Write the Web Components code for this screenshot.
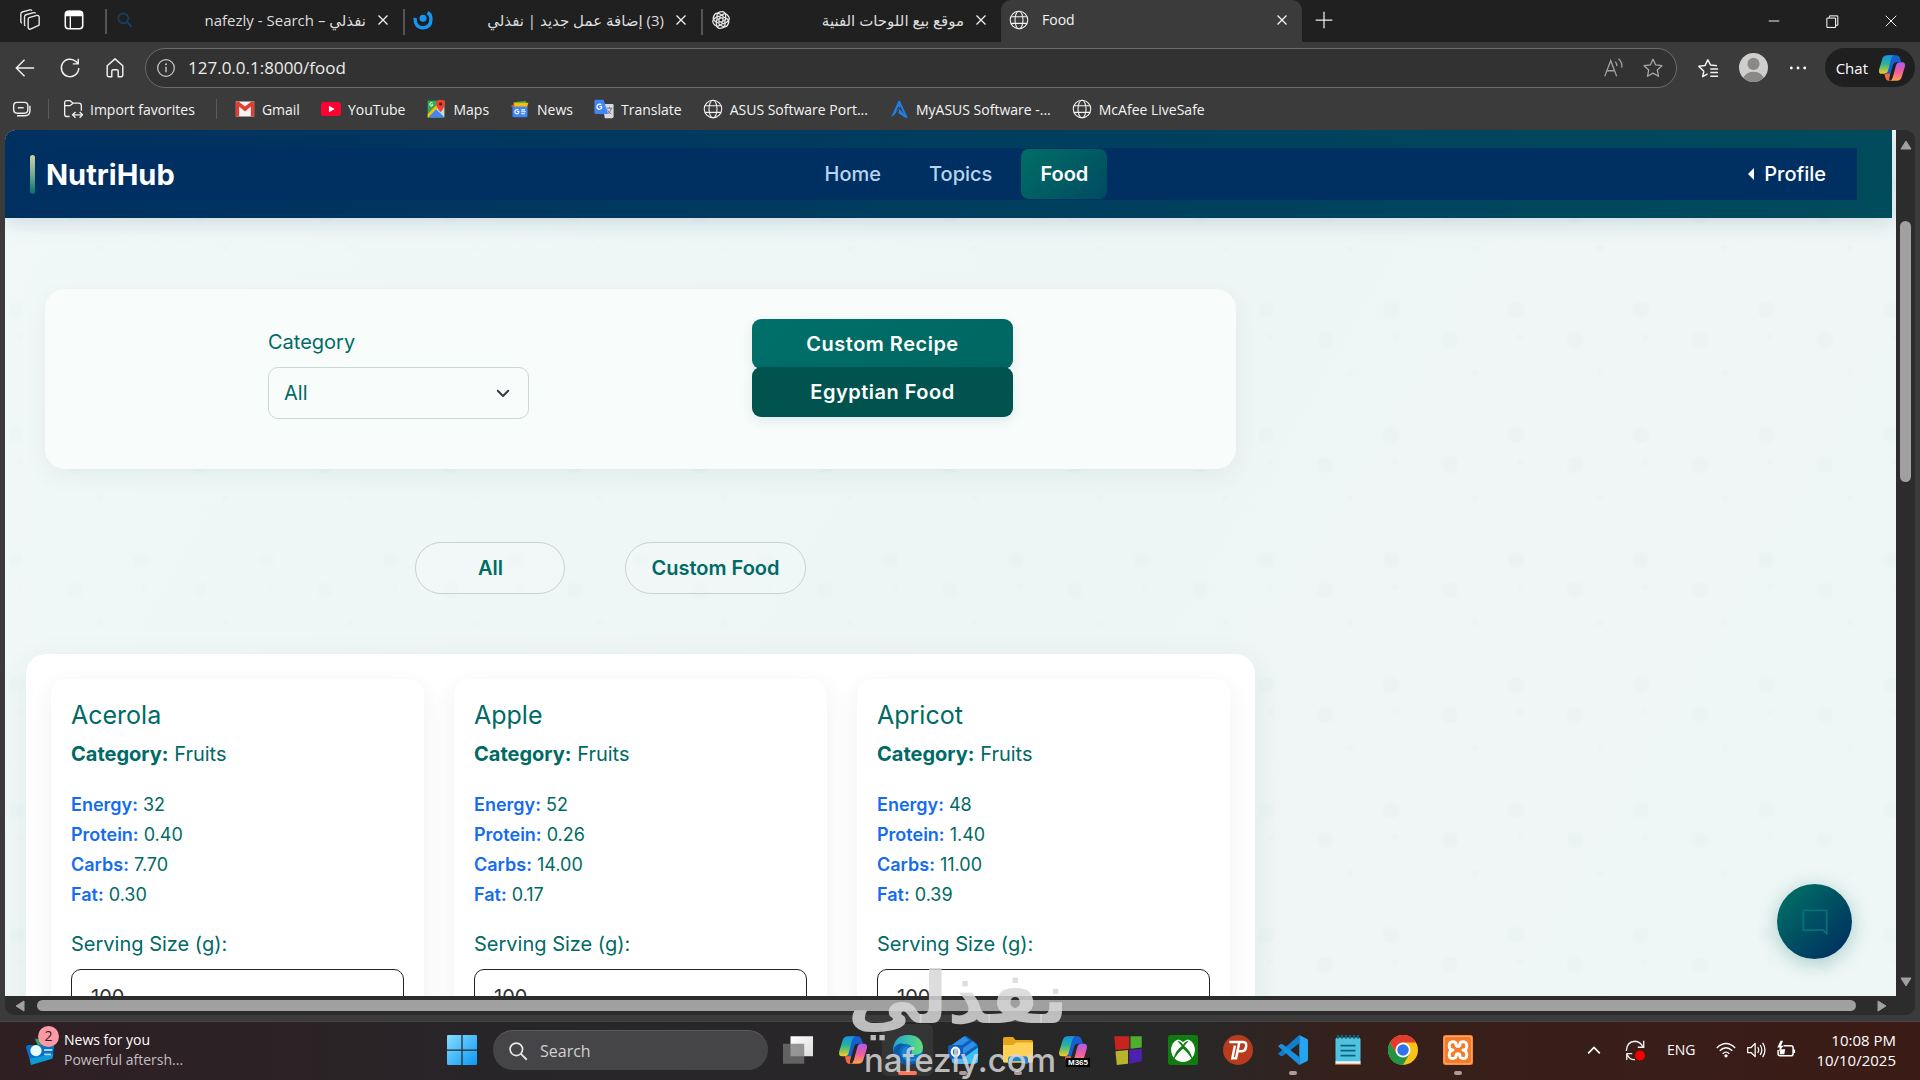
<!DOCTYPE html>
<html lang="en">
<head>
<meta charset="utf-8">
<title>Food</title>
<style>
  * { box-sizing: border-box; }
  body {
    margin: 0;
    height: 100vh;
    overflow: hidden;
    background: #3b3b3b;
    font-family: "Open Sans", "DejaVu Sans", sans-serif;
    font-size: 14px;
  }
</style>
</head>
<body>
<desktop-screen></desktop-screen>

<script>
const globe = '<g fill="none" stroke="#f2f2f2" stroke-width="1.3"><circle cx="12" cy="12" r="10.5"/><ellipse cx="12" cy="12" rx="4.8" ry="10.5"/><path d="M2.5 8h19M2.5 16h19"/></g>';
const copilot = `
  <defs>
    <linearGradient id="ca" x1="0" y1="0" x2="0" y2="1"><stop offset="0" stop-color="#1b8fe8"/><stop offset=".45" stop-color="#25b39b"/><stop offset="1" stop-color="#f2cf1d"/></linearGradient>
    <linearGradient id="cb" x1="0" y1="0" x2="0" y2="1"><stop offset="0" stop-color="#a95df0"/><stop offset=".5" stop-color="#ee5c9d"/><stop offset="1" stop-color="#ffa14a"/></linearGradient>
  </defs>
  <path d="M8 1h8q2 0 2.700 2.200L20 7h-4q-2.500 0-3.200 2.500L10 19q-.8 3-3 3z" fill="#1460d0"/>
  <path d="M8 1h6q-2 .5-2.700 3L8.500 14.500Q7.700 17 5.500 17H3.300Q0 17 1 13L3.600 4.500Q4.600 1 8 1z" fill="url(#ca)"/>
  <path d="M16 23h-6q2-.5 2.700-3l2.800-10.500Q16.300 7 18.500 7h2.200Q24 7 23 11l-2.600 8.500Q19.400 23 16 23z" fill="url(#cb)"/>
  <path d="M5.500 17h5l-.7 3Q9 23 11 23H9q-2 0-2.600-2.500z" fill="#f4683c"/>`;

const icons = {
  globe,
  copilot,
  workspaces: '<g fill="none" stroke="#e8e8e8" stroke-width="1.500" stroke-linejoin="round"><path d="M11 9.500 19.500 7q2-.4 2.500 1.500v9L12.500 22q-2 .3-2.500-1.500v-9q0-1.500 1-2z"/><path d="M7 18.500q-1-.4-1-2v-8q0-1.700 1.500-2.200L16 4q1.500-.3 2.200.8"/><path d="M3.200 15.500Q2 15 2 13.500v-8q0-1.700 1.500-2.200L12 1q1.600-.3 2.200.8"/></g>',
  tabs: '<rect x="2.500" y="2.500" width="19" height="19" rx="3.500" fill="none" stroke="#fff" stroke-width="1.700"/><path d="M2.500 5q.3-3 3-3h13q2.700 0 3 3v3h-19z" fill="#fff"/><path d="M8 8v13" stroke="#fff" stroke-width="1.500"/>',
  searchBlue: '<circle cx="10" cy="10" r="6" fill="none" stroke="#173f63" stroke-width="2"/><path d="m15 15 5 5" stroke="#173f63" stroke-width="2.500"/>',
  nafezly: '<circle cx="12" cy="10" r="4.200" fill="#1496f3"/><path d="M2.500 9.500Q2 21 12 21.500 22 21 21.500 10 21.300 5 17.500 3" fill="none" stroke="#1496f3" stroke-width="4"/>',
  gpt: '<g fill="none" stroke="#e8e8e8" stroke-width="1.500"><path id="p" d="M12 2.200q4.800-.8 5.600 4v5.300l-5.400 3.200M12 2.200Q8.500 2 7.300 5.500v6.200"/><use href="#p" transform="rotate(60 12 12)"/><use href="#p" transform="rotate(120 12 12)"/><use href="#p" transform="rotate(180 12 12)"/><use href="#p" transform="rotate(240 12 12)"/><use href="#p" transform="rotate(300 12 12)"/></g>',
  close: '<path d="m6 6 12 12M18 6 6 18" stroke="#f4f4f4" stroke-width="1.700"/>',
  plus: '<path d="M12 2v20M2 12h20" stroke="#eee" stroke-width="1.500"/>',
  minimize: '<path d="M3 12h18" stroke="#fff" stroke-width="1.600"/>',
  restore: '<path d="M3 6.500h14v15H3zM7 6V3h13.500v15H17" fill="none" stroke="#fff" stroke-width="1.600"/>',
  exit: '<path d="m3 3 18 18M21 3 3 21" stroke="#fff" stroke-width="1.600"/>',
  back: '<path d="M22 12H3M11.500 3 2.500 12l9 9" fill="none" stroke="#f0f0f0" stroke-width="1.600"/>',
  reload: '<path d="M21.500 12A9.500 9.500 0 1 1 18.500 5l2.500 2.500M21 2v5.500h-6" fill="none" stroke="#f0f0f0" stroke-width="1.600"/>',
  home: '<path d="M3.500 9.500 12 2l8.500 7.500V20q0 1.500-1.500 1.500h-3.500v-6q0-1.500-1.500-1.500h-4q-1.500 0-1.500 1.500v6H5q-1.500 0-1.500-1.500z" fill="none" stroke="#f0f0f0" stroke-width="1.600" stroke-linejoin="round"/>',
  info: '<circle cx="12" cy="12" r="10" fill="none" stroke="#c8c8c8" stroke-width="1.500"/><path d="M12 10.500V17" stroke="#c8c8c8" stroke-width="1.700"/><circle cx="12" cy="7.500" r="1.200" fill="#c8c8c8"/>',
  readAloud: '<path d="m3 21 6.500-17L16 21M5.500 15h8M14.500 5q2 2.200 1.500 5M18 2q4.500 4 3.500 9.500" fill="none" stroke="#a0a0a0" stroke-width="1.400"/>',
  star: '<path d="m12 2.500 2.900 6.200 6.800.8-5 4.700 1.300 6.800-6-3.400-6 3.400 1.300-6.800-5-4.700 6.800-.8z" fill="none" stroke="#a8a8a8" stroke-width="1.400" stroke-linejoin="round"/>',
  favorites: '<path d="m7.500 15.500-1.300 6 5.300-3M7.500 15.500 2 10.200l6.800-1L11.800 3l3 5.800 7 .8M14.500 13H23M14.500 17H23M14.500 21H23" fill="none" stroke="#f2f2f2" stroke-width="1.600" stroke-linejoin="round"/>',
  avatar: '<defs><clipPath id="c"><circle cx="12" cy="12" r="12"/></clipPath></defs><g clip-path="url(#c)"><path d="M0 0h24v24H0z" fill="#d0cecc"/><circle cx="12" cy="9" r="5" fill="#8b8987"/><ellipse cx="12" cy="22" rx="8.500" ry="6.500" fill="#8b8987"/></g>',
  dots: '<g fill="#fff"><circle cx="4" cy="12" r="1.700"/><circle cx="12" cy="12" r="1.700"/><circle cx="20" cy="12" r="1.700"/></g>',
  collections: '<g fill="none" stroke="#eee" stroke-width="1.700"><rect x="2" y="4" width="17" height="13" rx="4"/><path d="M7 10.500h7"/><path d="M21.500 8v6q0 6-6 6H6"/></g>',
  folderImport: '<path d="M8 21H4.500Q2 21 2 18.500v-14Q2 2 4.500 2h4L12 5h7q3 0 3 3v6M2 8h6.500L12 5M12 19h11M15 15.500 11.500 19l3.500 3.500M20 15.500l3.500 3.500-3.500 3.500" fill="none" stroke="#eee" stroke-width="1.600"/>',
  gmail: '<path d="M1 3h22v18H1z" fill="#f5f5f5"/><path d="M1 4.500v16.500h4V9l7 6 7-6v12h4V4.500Q21.500 2 19 3.500l-7 5.500-7-5.500Q2.500 2 1 4.500z" fill="#df3f33"/>',
  youtube: '<rect y="3.500" width="24" height="17" rx="3.500" fill="#ff0033"/><path d="M9.500 8v8l7-4z" fill="#fff"/>',
  maps: '<path d="M2 2h20v20H2z" fill="#34a853"/><path d="M2 22 22 2v20z" fill="#d6d6d6"/><path d="M2 22 12 12l10 10z" fill="#4285f4"/><path d="M2 18 18 2h4L3 22H2z" fill="#fbbc04"/><path d="M17.500 16Q12 9 12 6q.5-5 5.500-5T23 6q0 3-5.500 10z" fill="#ea4335"/><circle cx="17.500" cy="6" r="2" fill="#7b1710"/><path d="M8.500 7H6.200M8.500 7Q7 9.500 5 8 3.800 6 5.500 4.500q1.300-.8 2.500.3" fill="none" stroke="#fff" stroke-width="1.100"/>',
  news: '<path d="m4 4 15-2 1 9H5z" fill="#34a853"/><path d="m1 9 4-4 3 6z" fill="#ea4335"/><path d="M5 4.500h17L20 12H5z" fill="#fbbc04"/><path d="M3 9h18v11q0 2-2 2H5q-2 0-2-2z" fill="#4285f4"/><path d="M11 15H8.500M11 15q-.5 3-3 2.800Q5.500 17 5.800 15q.6-2.500 3-2.400l1.500.8M13.500 13H18M13.500 15.300H19M13.500 17.600H18" fill="none" stroke="#fff" stroke-width="1.300"/>',
  translate: '<path d="M10 6h12q1.500 0 1.500 1.500V21q0 2-2 2H13z" fill="#d8dce2"/><path d="M2 1h9.500L17 18H2.500Q.5 18 .5 16V2.500Q.5 1 2 1z" fill="#4285f4"/><path d="M9.500 9H6.700M9.500 9Q9 12.500 6 12.300 3.300 11.500 3.500 9 4 6 7 6l1.800.8" fill="none" stroke="#fff" stroke-width="1.500"/><path d="M15 11h7M18.500 9.500V11M21 11q-1 4-4.500 7M16 13q1.500 3.500 5 5" fill="none" stroke="#6e7a86" stroke-width="1.200"/>',
  myasus: '<path d="M11.500 2 2.500 21.500l4-2.500 7-9.500z" fill="#2080e8"/><path d="m12 2.500 9 19.500-9.500-6" fill="none" stroke="#2080e8" stroke-width="2.200" stroke-linejoin="round"/><path d="m13 12 8 10-3-1-6.500-6z" fill="#2080e8"/><path d="m8 16 3.500-7.500.8 2z" fill="#3b3b3b"/>',
  chevron: '<path d="m5 9 7 7 7-7" fill="none" stroke="#343a40" stroke-width="2.600" stroke-linecap="round" stroke-linejoin="round"/>',
  chat: '<path d="M2 2h20v20l-3-3H2z" fill="none" stroke="#087078" stroke-width="1.500"/>',
  up: '<path d="M12 4 22 20H2z" fill="#a0a0a0" stroke="#a0a0a0" stroke-width="2" stroke-linejoin="round"/>',
  down: '<path d="M12 20 2 4h20z" fill="#a0a0a0" stroke="#a0a0a0" stroke-width="2" stroke-linejoin="round"/>',
  left: '<path d="M4 12 20 2v20z" fill="#a0a0a0" stroke="#a0a0a0" stroke-width="2" stroke-linejoin="round"/>',
  right: '<path d="M20 12 4 2v20z" fill="#a0a0a0" stroke="#a0a0a0" stroke-width="2" stroke-linejoin="round"/>',
  widgets: '<path d="M7 3h9l4 5-8 6z" fill="#26a269"/><path d="M0 10q0-2 2-2h19q2 0 1.500 2L21 18 4 23z" fill="#0b6fc4"/><path d="m3 19 19-4-1 4-17 5z" fill="#0d9bd8"/><circle cx="8" cy="12.500" r="4.500" fill="#e9f7ff"/><path d="M14.500 12H21M14.500 15.500H20" stroke="#9edcff" stroke-width="1.500"/>',
  windows: '<defs><linearGradient id="w" x1="0" y1="0" x2="1" y2="1"><stop stop-color="#86dcff"/><stop offset="1" stop-color="#0a98f5"/></linearGradient></defs><path d="M0 1q0-1 1-1h10.500v11.500H0zM12.500 0H23q1 0 1 1v10.500H12.500zM0 12.500h11.500V24H1q-1 0-1-1zM12.500 12.500H24V23q0 1-1 1H12.500z" fill="url(#w)"/>',
  search: '<circle cx="10" cy="10" r="7.500" fill="none" stroke="#e8e8e8" stroke-width="2"/><path d="m15.500 15.500 7 7" stroke="#e8e8e8" stroke-width="2.200"/>',
  taskview: '<defs><linearGradient id="t" x1="0" y1="0" x2="1" y2="1"><stop stop-color="#fff"/><stop offset="1" stop-color="#dcdcdc"/></linearGradient></defs><path d="M6 1h18v16H6z" fill="url(#t)"/><path d="M0 7h17v16H0z" fill="#777" opacity=".75"/>',
  edge: '<defs><linearGradient id="e" x1="0" y1="0" x2="1" y2="0"><stop stop-color="#1fa4d6"/><stop offset="1" stop-color="#5ee07a"/></linearGradient></defs><circle cx="12" cy="12" r="12" fill="#0f6fc6"/><path d="M0 12Q1 0 12 0t12 10q0 6-7 6-3 0-2-2 2-6-5-7-7 0-10 5z" fill="url(#e)"/><path d="M10 8q-8 2-3 10 4 5 13 2-4 4-9 4Q0 22 1 10q4-5 9-2z" fill="#0c59a4"/><path d="M12 9q-4 5 0 9 5 3 10-1-3 5-9 4-7-2-6-7 1-4 5-5z" fill="#1c88d8"/>',
  outlook: '<path d="m3 8 10-7q1-.7 2 0l8 6q1 .8 1 2v11q0 3-3 3H6q-3 0-3-3z" fill="#0f5fb5"/><path d="m3 8 10-7 4 3-13 9zM8 13 20 5l3 3-13 9z" fill="#2d8fe8"/><path d="m6 23 18-13v10q0 3-3 3z" fill="#38c1f5"/><path d="m3 14 14 9H6q-3 0-3-3z" fill="#59b8f7"/><rect y="8" width="12" height="11" rx="2" fill="#0f5ebd"/><ellipse cx="6" cy="13.500" rx="3" ry="3.400" fill="none" stroke="#fff" stroke-width="1.800"/>',
  folder: '<path d="M0 3q0-1.500 1.500-1.500H8L10 4h12.500Q24 4 24 5.500V21q0 1-1 1H1q-1 0-1-1z" fill="#e5a51b"/><path d="M0 8h8l2.500-2H24v14.500q0 1.500-1.500 1.500h-21Q0 22 0 20.500z" fill="#ffd257"/><path d="M4 23v-3.500Q4 17 6.500 17h11q2.500 0 2.500 2.500V23h-3v-2H7v2z" fill="#1883d7"/>',
  m365: copilot,
  blocks: '<path d="M1 1h12v10L2 12z" fill="#c62420"/><path d="M14 1h9v9l-9 1z" fill="#4faf2c"/><path d="m2 13 10-1v11L3 24z" fill="#b7b32a"/><path d="m13 12 10-1v10l-10 2z" fill="#4c20b0"/>',
  xbox: '<rect width="24" height="24" rx="2" fill="#107c10"/><circle cx="12" cy="12" r="9.500" fill="#fff"/><path d="M6 3.500q3-.5 6 2 3-2.500 6-2Q12 0 6 3.500zM12 8q7 5 7.500 12-3.500-6-7.500-9-4 3-7.500 9Q5 13 12 8zM7.500 4.500Q11 5 12 8q1-3 4.500-3.500L12 10z" fill="#107c10"/>',
  pstudio: '<circle cx="12" cy="12" r="12" fill="#b73b1c"/><path d="M5 5.500h11q3 0 2.500 3.500l-.3 1.500q-.6 2.500-3.500 2.500h-3M9.500 8.500 7.500 18.500h3L13 6" fill="none" stroke="#fff" stroke-width="2"/>',
  vscode: '<path d="m17 0 6 3q1 .5 1 1.500v15q0 1-1 1.500l-6 3z" fill="#25a4f2"/><path d="m17 0v6.500L4 16.500 2.500 17 0 15z" fill="#0f7fcc"/><path d="M17 24 0 9l2.500-2L4 7.500l13 10z" fill="#1791df"/>',
  notepad: '<rect x="2" y="2" width="20" height="21" rx="1.500" fill="#50c3e0"/><path d="M2 21h20v2q0 1-1 1H3q-1 0-1-1z" fill="#f4f4f4"/><path d="M2 23h20v1H2z" fill="#b2632b"/><path d="M6 8.500h12M6 12.500h12M6 16.500h12" stroke="#07627f" stroke-width="1.500"/><path d="M4 0v3M7.200 0v3M10.400 0v3M13.600 0v3M16.800 0v3M20 0v3" stroke="#0c6a85" stroke-width="1.500"/>',
  chrome: '<circle cx="12" cy="12" r="12" fill="#fbc116"/><path d="M1.600 6A12 12 0 0 1 22.400 6H12L6.800 15z" fill="#e33b2e"/><path d="M1.600 6A12 12 0 0 0 12 24l5.200-9H6.800z" fill="#229342"/><circle cx="12" cy="12" r="6" fill="#fff"/><circle cx="12" cy="12" r="4.600" fill="#2f74e8"/>',
  xampp: '<rect width="24" height="24" rx="2" fill="#f47b2a"/><rect x="1" y="1" width="22" height="22" rx="2" fill="none" stroke="#ffa566"/><path d="M9 5.500Q5 5 5 8.500T8 12q-3 .5-3 4t4 2.500q1.500-.5 1.500-2T12 15t1.500 1.500 1.500 2q4 1 4-2.500t-3-4q3 0 3-3.500t-4-3q-1.500.5-1.500 2T12 9t-1.500-1.500T9 5.500z" fill="none" stroke="#fff" stroke-width="2.400" stroke-linejoin="round"/>',
  chevronUp: '<path d="m5 16 7-7 7 7" fill="none" stroke="#fff" stroke-width="2"/>',
  sync: '<path d="M2.500 13Q3 3 12 2.500q6 .5 8.500 6M21.500 2v7H15M2.500 16H9M3 23v-7q3 7 9 6.500" fill="none" stroke="#eee" stroke-width="1.500"/><circle cx="17.500" cy="18" r="5.500" fill="#f40000"/>',
  wifi: '<g fill="none" stroke="#fff" stroke-width="1.600"><path d="M1 9.500Q12-1 23 9.500M4.500 13Q12 5.500 19.500 13M8 16.500q4-4 8 0"/></g><circle cx="12" cy="19" r="2" fill="#fff"/>',
  volume: '<path d="M2 9h4l5-5v16l-5-5H2zM14 8.500q2.500 3.500 0 7M17 6q4 6 0 12M20 3.500q5.500 8.500 0 17" fill="none" stroke="#fff" stroke-width="1.500" stroke-linejoin="round"/>',
  battery: '<path d="M9 7h9q2.500 0 2.500 2.500v7Q20.500 19 18 19H5q-2.500 0-2.500-2.500V12M22 11.500v4" fill="none" stroke="#fff" stroke-width="1.800"/><path d="M5 11h6l-1 6H4.500z" fill="#fff"/><path d="m5.500 1-4 8h3L3.500 14 9 7H6L8.500 1z" fill="#fff"/>'
};

class UiIcon extends HTMLElement {
  connectedCallback() {
    const size = this.getAttribute('size') || 20;
    this.attachShadow({ mode: 'open' });
    this.shadowRoot.innerHTML = `
      <style>
        :host { display: inline-flex; flex: none; }
        svg { display: block; }
      </style>
      <svg width="${size}" height="${size}" viewBox="0 0 24 24" aria-hidden="true">${icons[this.getAttribute('name')]}</svg>
    `;
  }
}
customElements.define('ui-icon', UiIcon);

class BrowserTab extends HTMLElement {
  connectedCallback() {
    const active = this.hasAttribute('active');
    this.attachShadow({ mode: 'open' });
    this.shadowRoot.innerHTML = `
      <style>
        :host {
          display: flex;
          align-items: center;
          gap: 8px;
          flex: 0 1 298px;
          min-width: 0;
          height: 42px;
          padding: 0 11px 2px 8px;
          box-sizing: border-box;
          color: #dedede;
          font-size: 15px;
        }
        :host([active]) {
          flex-basis: 301px;
          background: #3b3b3b;
          border-radius: 10px 10px 0 0;
          color: #f4f4f4;
          font-size: 14px;
          gap: 13px;
        }
        :host([line]) { border-right: 2px solid #555; border-image: linear-gradient(transparent 22%, #555 22% 82%, transparent 82%) 1; }
        .title {
          flex: 1;
          min-width: 0;
          overflow: hidden;
          white-space: nowrap;
          line-height: 24px;
        }
        button { display: flex; padding: 0; border: 0; background: none; }
      </style>
      <ui-icon name="${this.getAttribute('icon')}" size="20"></ui-icon>
      <span class="title" dir="${active ? 'ltr' : 'rtl'}"><slot></slot></span>
      <button aria-label="Close tab"><ui-icon name="close" size="18"></ui-icon></button>
    `;
  }
}
customElements.define('browser-tab', BrowserTab);

class TabStrip extends HTMLElement {
  connectedCallback() {
    this.attachShadow({ mode: 'open' });
    this.shadowRoot.innerHTML = `
      <style>
        :host { display: flex; align-items: center; height: 42px; background: #202020; }
        button { display: flex; padding: 0; border: 0; background: none; }
        .tools { display: flex; gap: 22px; padding: 0 20px 2px 19px; }
        .line { width: 2px; height: 25px; background: #555; }
        .new { padding: 0 0 2px 12px; }
        .window { display: flex; gap: 44px; margin-left: auto; padding-right: 22px; }
      </style>
      <div class="tools">
        <button aria-label="Workspaces"><ui-icon name="workspaces" size="22"></ui-icon></button>
        <button aria-label="Tab actions"><ui-icon name="tabs" size="22"></ui-icon></button>
      </div>
      <span class="line"></span>
      <browser-tab icon="searchBlue" line>نفذلي – nafezly - Search</browser-tab>
      <browser-tab icon="nafezly" line>(3) إضافة عمل جديد | نفذلي</browser-tab>
      <browser-tab icon="gpt">موقع بيع اللوحات الفنية</browser-tab>
      <browser-tab icon="globe" active>Food</browser-tab>
      <button class="new" aria-label="New tab"><ui-icon name="plus" size="20"></ui-icon></button>
      <div class="window">
        <button aria-label="Minimize"><ui-icon name="minimize" size="14"></ui-icon></button>
        <button aria-label="Restore"><ui-icon name="restore" size="15"></ui-icon></button>
        <button aria-label="Close"><ui-icon name="exit" size="14"></ui-icon></button>
      </div>
    `;
  }
}
customElements.define('tab-strip', TabStrip);

class AddressBar extends HTMLElement {
  connectedCallback() {
    this.attachShadow({ mode: 'open' });
    this.shadowRoot.innerHTML = `
      <style>
        * { box-sizing: border-box; }
        :host { display: flex; align-items: center; height: 51px; padding: 0 5px 0 14px; }
        button { display: flex; padding: 0; border: 0; background: none; font: inherit; color: #fff; }
        .nav { display: flex; gap: 23px; margin-right: 19px; }
        .box {
          flex: 1;
          display: flex;
          align-items: center;
          gap: 12px;
          height: 40px;
          padding: 0 12px 0 10px;
          background: #323232;
          border: 1px solid #6c6c6c;
          border-radius: 20px;
        }
        input {
          flex: 1;
          padding: 0;
          border: 0;
          outline: 0;
          background: none;
          color: #ececec;
          font: inherit;
          font-size: 17px;
        }
        .actions { display: flex; gap: 18px; }
        .side { display: flex; align-items: center; gap: 30px; padding: 0 17px 0 20px; }
        .avatar { margin: 0 -10px; }
        .chat {
          align-items: center;
          gap: 10px;
          height: 39px;
          padding: 0 9px 0 11px;
          border-radius: 20px;
          background: #1f1f1f;
          font-size: 15px;
        }
      </style>
      <div class="nav">
        <button aria-label="Back"><ui-icon name="back" size="22"></ui-icon></button>
        <button aria-label="Reload"><ui-icon name="reload" size="22"></ui-icon></button>
        <button aria-label="Home"><ui-icon name="home" size="22"></ui-icon></button>
      </div>
      <div class="box">
        <ui-icon name="info" size="20"></ui-icon>
        <input type="text" aria-label="Address" value="127.0.0.1:8000/food">
        <span class="actions">
          <ui-icon name="readAloud" size="22"></ui-icon>
          <ui-icon name="star" size="22"></ui-icon>
        </span>
      </div>
      <div class="side">
        <button aria-label="Favorites"><ui-icon name="favorites" size="22"></ui-icon></button>
        <button class="avatar" aria-label="Account"><ui-icon name="avatar" size="29"></ui-icon></button>
        <button aria-label="More"><ui-icon name="dots" size="20"></ui-icon></button>
      </div>
      <button class="chat">Chat <ui-icon name="copilot" size="28"></ui-icon></button>
    `;
  }
}
customElements.define('address-bar', AddressBar);

class FavoritesBar extends HTMLElement {
  connectedCallback() {
    const links = [
      ['gmail', 'Gmail'], ['youtube', 'YouTube'], ['maps', 'Maps'], ['news', 'News'],
      ['translate', 'Translate'], ['globe', 'ASUS Software Port...'],
      ['myasus', 'MyASUS Software -...'], ['globe', 'McAfee LiveSafe']
    ];
    this.attachShadow({ mode: 'open' });
    this.shadowRoot.innerHTML = `
      <style>
        :host { display: flex; align-items: center; height: 37px; padding: 0 12px 5px; box-sizing: border-box; }
        a {
          display: flex;
          align-items: center;
          gap: 7px;
          margin-right: 21px;
          color: #f4f4f4;
          text-decoration: none;
          white-space: nowrap;
        }
        .line { width: 1px; height: 20px; background: #5a5a5a; }
        .line:first-of-type { margin: 0 14px 0 16px; }
        .line:last-of-type { margin-right: 18px; }
      </style>
      <ui-icon name="collections" size="20"></ui-icon>
      <span class="line"></span>
      <a href="#"><ui-icon name="folderImport" size="20"></ui-icon>Import favorites</a>
      <span class="line"></span>
      ${links.map(([icon, text]) => `<a href="#"><ui-icon name="${icon}" size="20"></ui-icon>${text}</a>`).join('')}
    `;
  }
}
customElements.define('favorites-bar', FavoritesBar);

class NutriNavbar extends HTMLElement {
  connectedCallback() {
    this.attachShadow({ mode: 'open' });
    this.shadowRoot.innerHTML = `
      <style>
        :host {
          display: block;
          margin-right: 4px;
          padding: 18px 35px 18px 25px;
          background: linear-gradient(100deg, #003060, #00395f 35%, #004b5c);
          box-shadow: 0 4px 20px rgba(0, 48, 96, 0.15);
        }
        nav {
          display: flex;
          align-items: center;
          justify-content: space-between;
          height: 52px;
          background: #003062;
        }
        a { color: #b8d4ee; text-decoration: none; }
        .brand {
          display: flex;
          align-items: center;
          gap: 11px;
          color: #fff;
          font-size: 29px;
          font-weight: 700;
        }
        .brand::before {
          content: "";
          width: 5px;
          height: 39px;
          border-radius: 3px;
          background: linear-gradient(#d5cfa6, #75ab90 50%, #00716b);
        }
        ul { display: flex; gap: 10px; margin: 0; padding: 0; list-style: none; }
        li a {
          display: block;
          padding: 0 19px;
          border-radius: 8px;
          line-height: 50px;
          font-size: 20px;
          font-weight: 500;
        }
        .active {
          background: linear-gradient(135deg, #006f65, #004a62);
          color: #fff;
          font-weight: 600;
        }
        .profile {
          display: flex;
          align-items: center;
          gap: 10px;
          padding: 0 31px 0 10px;
          color: #fff;
          font-size: 20px;
          font-weight: 500;
        }
        .profile::before {
          content: "";
          border: 6px solid transparent;
          border-right-color: #fff;
          border-left: 0;
        }
      </style>
      <nav>
        <a class="brand" href="#">NutriHub</a>
        <ul>
          <li><a href="#">Home</a></li>
          <li><a href="#">Topics</a></li>
          <li><a href="#" class="active">Food</a></li>
        </ul>
        <a class="profile" href="#">Profile</a>
      </nav>
    `;
  }
}
customElements.define('nutri-navbar', NutriNavbar);

class FilterPanel extends HTMLElement {
  connectedCallback() {
    this.attachShadow({ mode: 'open' });
    this.shadowRoot.innerHTML = `
      <style>
        * { box-sizing: border-box; }
        :host {
          display: flex;
          justify-content: space-evenly;
          align-items: flex-start;
          min-height: 180px;
          padding: 30px 0;
          border-radius: 20px;
          background: #f8fdfb;
          box-shadow: 0 8px 25px rgba(0, 60, 60, 0.06);
          box-sizing: border-box;
        }
        .field, .buttons { display: flex; flex-direction: column; width: 261px; }
        label { margin: 8px 0 10px; line-height: 30px; font-size: 20px; color: #006a65; }
        .select { display: grid; align-items: center; }
        .select > * { grid-area: 1 / 1; }
        .select ui-icon { justify-self: end; margin-right: 17px; pointer-events: none; }
        select {
          appearance: none;
          height: 52px;
          padding: 0 15px;
          border: 1px solid #ccd8d8;
          border-radius: 10px;
          background: transparent;
          color: #006a65;
          font: inherit;
          font-size: 20px;
        }
        button {
          height: 50px;
          padding: 0;
          border: 0;
          border-radius: 9px;
          background: linear-gradient(135deg, #00706a, #006661);
          box-shadow: 0 4px 12px rgba(0, 48, 96, 0.1);
          color: #fff;
          font: inherit;
          font-size: 20px;
          font-weight: 600;
          letter-spacing: 0.5px;
        }
        button + button { margin-top: -2px; background: #00534e; }
      </style>
      <div class="field">
        <label for="category">Category</label>
        <div class="select">
          <select id="category"><option>All</option></select>
          <ui-icon name="chevron" size="18"></ui-icon>
        </div>
      </div>
      <div class="buttons">
        <button>Custom Recipe</button>
        <button>Egyptian Food</button>
      </div>
    `;
  }
}
customElements.define('filter-panel', FilterPanel);

class FoodCard extends HTMLElement {
  connectedCallback() {
    const facts = ['Energy', 'Protein', 'Carbs', 'Fat'];
    this.attachShadow({ mode: 'open' });
    this.shadowRoot.innerHTML = `
      <style>
        * { box-sizing: border-box; }
        :host {
          display: block;
          padding: 20px;
          border-radius: 15px;
          background: #fff;
          box-shadow: 0 8px 25px rgba(0, 48, 70, 0.07);
          color: #006a65;
          box-sizing: border-box;
        }
        h5 { margin: 0 0 6px; font-size: 25px; font-weight: 400; line-height: 32px; }
        p { margin: 0 0 19px; font-size: 20px; line-height: 34px; }
        b { font-weight: 700; }
        ul { margin: 0 0 19px; padding: 0; list-style: none; font-size: 18px; line-height: 30px; }
        li b { color: #146cf0; font-weight: 600; }
        label { display: block; margin-bottom: 10px; font-size: 20px; line-height: 30px; }
        input {
          width: 100%;
          height: 55px;
          padding: 0 19px;
          border: 1px solid #222;
          border-radius: 10px;
          background: #fff;
          color: #333;
          font: inherit;
          font-size: 20px;
        }
      </style>
      <h5>${this.getAttribute('name')}</h5>
      <p><b>Category:</b> Fruits</p>
      <ul>
        ${facts.map(f => `<li><b>${f}:</b> ${this.getAttribute(f)}</li>`).join('')}
      </ul>
      <label for="serving">Serving Size (g):</label>
      <input id="serving" type="text" inputmode="numeric" value="100">
    `;
  }
}
customElements.define('food-card', FoodCard);

class FoodPage extends HTMLElement {
  connectedCallback() {
    this.attachShadow({ mode: 'open' });
    this.shadowRoot.innerHTML = `
      <style>
        * { box-sizing: border-box; }
        :host {
          display: block;
          position: relative;
          overflow: hidden;
          border-top-left-radius: 10px;
          font-family: Inter, sans-serif;
          background:
            radial-gradient(circle at 11px 55px, rgba(0, 90, 100, 0.014) 6px, transparent 10px),
            radial-gradient(circle at 70px 85px, rgba(0, 90, 100, 0.014) 6px, transparent 10px),
            radial-gradient(circle at 15px 82px, rgba(0, 90, 100, 0.01) 2px, transparent 5px),
            radial-gradient(circle at 95px 118px, rgba(0, 90, 100, 0.01) 2px, transparent 5px),
            linear-gradient(120deg, #f1f9f8, #edf6f5 45%, #eff6f5 75%, #eef7f6);
          background-size: 125px 125px, 125px 125px, 125px 125px, 125px 125px, auto;
        }
        main { max-width: 1250px; padding: 71px 0 0 21px; }
        filter-panel { margin: 0 19px; }
        .pills { display: flex; justify-content: center; margin: 73px 0 60px; }
        .pills button {
          min-width: 150px;
          height: 52px;
          margin-right: 60px;
          padding: 0 25px;
          border: 1px solid #c4d3d2;
          border-radius: 26px;
          background: rgba(255, 255, 255, 0.2);
          color: #006a65;
          font: inherit;
          font-size: 20px;
          font-weight: 600;
        }
        .grid {
          display: grid;
          grid-template-columns: repeat(3, 1fr);
          gap: 30px;
          padding: 25px;
          border-radius: 20px;
          background: #fff;
          box-shadow: 0 8px 32px rgba(0, 70, 70, 0.07);
        }
        .fab {
          position: absolute;
          right: 44px;
          bottom: 37px;
          display: grid;
          place-items: center;
          width: 75px;
          height: 75px;
          padding: 0;
          border: 0;
          border-radius: 50%;
          background: linear-gradient(135deg, #006a65 15%, #003060 90%);
          box-shadow: 0 4px 20px rgba(0, 106, 101, 0.3);
        }
      </style>
      <nutri-navbar></nutri-navbar>
      <main>
        <filter-panel></filter-panel>
        <div class="pills">
          <button>All</button>
          <button>Custom Food</button>
        </div>
        <div class="grid">
          <food-card name="Acerola" energy="32" protein="0.40" carbs="7.70" fat="0.30"></food-card>
          <food-card name="Apple" energy="52" protein="0.26" carbs="14.00" fat="0.17"></food-card>
          <food-card name="Apricot" energy="48" protein="1.40" carbs="11.00" fat="0.39"></food-card>
        </div>
      </main>
      <button class="fab" aria-label="Chat"><ui-icon name="chat" size="28"></ui-icon></button>
    `;
  }
}
customElements.define('food-page', FoodPage);

class ScrollBar extends HTMLElement {
  connectedCallback() {
    const vertical = this.hasAttribute('vertical');
    this.attachShadow({ mode: 'open' });
    this.shadowRoot.innerHTML = `
      <style>
        :host { display: flex; align-items: center; justify-content: space-between; background: #2c2c2c; padding: 0 27px 0 9px; }
        :host([vertical]) { flex-direction: column; padding: 9px 0 8px; border-top-right-radius: 10px; }
        .track { flex: 1; display: flex; margin: 0 20px 0 11px; }
        .thumb { flex: 1; height: 11px; border-radius: 6px; background: #a0a0a0; }
        :host([vertical]) .track { width: 11px; margin: 70px 0 10px; }
        :host([vertical]) .thumb { height: 35%; }
      </style>
      <ui-icon name="${vertical ? 'up' : 'left'}" size="12"></ui-icon>
      <div class="track"><div class="thumb"></div></div>
      <ui-icon name="${vertical ? 'down' : 'right'}" size="12"></ui-icon>
    `;
  }
}
customElements.define('scroll-bar', ScrollBar);

class TaskBar extends HTMLElement {
  connectedCallback() {
    const apps = ['taskview', 'copilot', 'edge', 'outlook', 'folder', 'm365', 'blocks', 'xbox', 'pstudio', 'vscode', 'notepad', 'chrome', 'xampp'];
    this.attachShadow({ mode: 'open' });
    this.shadowRoot.innerHTML = `
      <style>
        * { box-sizing: border-box; }
        :host {
          display: grid;
          grid-template-columns: 1fr auto 1fr;
          align-items: center;
          height: 59px;
          padding: 0 24px 2px 26px;
          border-top: 1px solid #454343;
          background: linear-gradient(90deg, #2f1f23, #282528 25%, #282828 62%, #36201b 70%, #3b1b16);
          color: #fff;
          line-height: 20px;
          box-sizing: border-box;
        }
        .news { display: flex; align-items: center; gap: 8px; position: relative; }
        .news small { display: block; color: #c4bfc0; font-size: 14px; }
        .badge {
          position: absolute;
          left: 12px;
          top: -4px;
          width: 21px;
          height: 21px;
          border-radius: 50%;
          background: #ff99a4;
          color: #222;
          text-align: center;
        }
        .apps { display: flex; align-items: center; padding-left: 10px; }
        .search {
          display: flex;
          align-items: center;
          gap: 12px;
          width: 275px;
          height: 40px;
          margin: 0 2px 0 16px;
          padding: 0 15px;
          border-radius: 20px;
          border-top: 1px solid #5c5c60;
          background: #454548;
        }
        input { width: 100%; padding: 0; border: 0; background: none; color: #d0d0d0; font: inherit; font-size: 16px; }
        input::placeholder { color: #d0d0d0; }
        .app {
          position: relative;
          display: grid;
          place-items: center;
          width: 51px;
          height: 52px;
          margin: 0 2px;
          padding: 0;
          border: 0;
          border-radius: 6px;
          background: none;
        }
        .edge { background: #353535; }
        .edge::after, .vscode::after, .xampp::after, .outlook::after, .folder::after {
          content: "";
          position: absolute;
          bottom: 1px;
          width: 8px;
          height: 4px;
          border-radius: 2px;
          background: #b09a98;
        }
        .edge::after { width: 19px; background: #ff765c; }
        .tag {
          position: absolute;
          right: 8px;
          bottom: 9px;
          padding: 0 2px;
          background: #000;
          color: #fff;
          font-size: 8px;
          font-weight: 700;
          line-height: 9px;
        }
        .tray { display: flex; align-items: center; justify-content: flex-end; gap: 10px; }
        .lang { margin: 0 11px; }
        .clock { margin-left: 10px; font-size: 15px; text-align: right; }
      </style>
      <div class="news">
        <ui-icon name="widgets" size="30"></ui-icon>
        <span class="badge">2</span>
        <span>News for you<small>Powerful aftersh...</small></span>
      </div>
      <div class="apps">
        <ui-icon name="windows" size="30"></ui-icon>
        <label class="search"><ui-icon name="search" size="20"></ui-icon><input type="text" placeholder="Search" aria-label="Search"></label>
        ${apps.map(a => `<button class="app ${a}" aria-label="${a}"><ui-icon name="${a}" size="30"></ui-icon>${a === 'm365' ? '<span class="tag">M365</span>' : ''}</button>`).join('')}
      </div>
      <div class="tray">
        <ui-icon name="chevronUp" size="20"></ui-icon>
        <ui-icon name="sync" size="22" style="margin-left: 10px"></ui-icon>
        <span class="lang">ENG</span>
        <ui-icon name="wifi" size="20"></ui-icon>
        <ui-icon name="volume" size="20"></ui-icon>
        <ui-icon name="battery" size="20"></ui-icon>
        <span class="clock">10:08 PM<br>10/10/2025</span>
      </div>
    `;
  }
}
customElements.define('task-bar', TaskBar);

class WaterMark extends HTMLElement {
  connectedCallback() {
    this.attachShadow({ mode: 'open' });
    this.shadowRoot.innerHTML = `
      <style>
        :host {
          position: absolute;
          left: 50%;
          bottom: 0;
          width: 216px;
          margin-left: -108px;
          color: rgba(215, 215, 215, 0.85);
          text-align: center;
          white-space: nowrap;
          pointer-events: none;
        }
        div { font: 700 72px/84px "DejaVu Sans", sans-serif; }
        span { display: block; font: 500 33px/40px Inter, sans-serif; }
      </style>
      <div dir="rtl">نفذلي</div>
      <span>nafezly.com</span>
    `;
  }
}
customElements.define('water-mark', WaterMark);

class DesktopScreen extends HTMLElement {
  connectedCallback() {
    this.attachShadow({ mode: 'open' });
    this.shadowRoot.innerHTML = `
      <style>
        :host { display: flex; flex-direction: column; position: relative; height: 100vh; overflow: hidden; }
        .view {
          flex: 1;
          min-height: 0;
          display: grid;
          grid-template: minmax(0, 1fr) 19px / minmax(0, 1fr) 19px;
          margin: 0 5px 6px;
          border-radius: 10px;
          overflow: hidden;
          background: #2c2c2c;
        }
        .view scroll-bar:last-child { grid-column: 1 / 3; }
      </style>
      <tab-strip></tab-strip>
      <address-bar></address-bar>
      <favorites-bar></favorites-bar>
      <div class="view">
        <food-page></food-page>
        <scroll-bar vertical></scroll-bar>
        <scroll-bar></scroll-bar>
      </div>
      <task-bar></task-bar>
      <water-mark></water-mark>
    `;
  }
}
customElements.define('desktop-screen', DesktopScreen);
</script>
</body>
</html>
